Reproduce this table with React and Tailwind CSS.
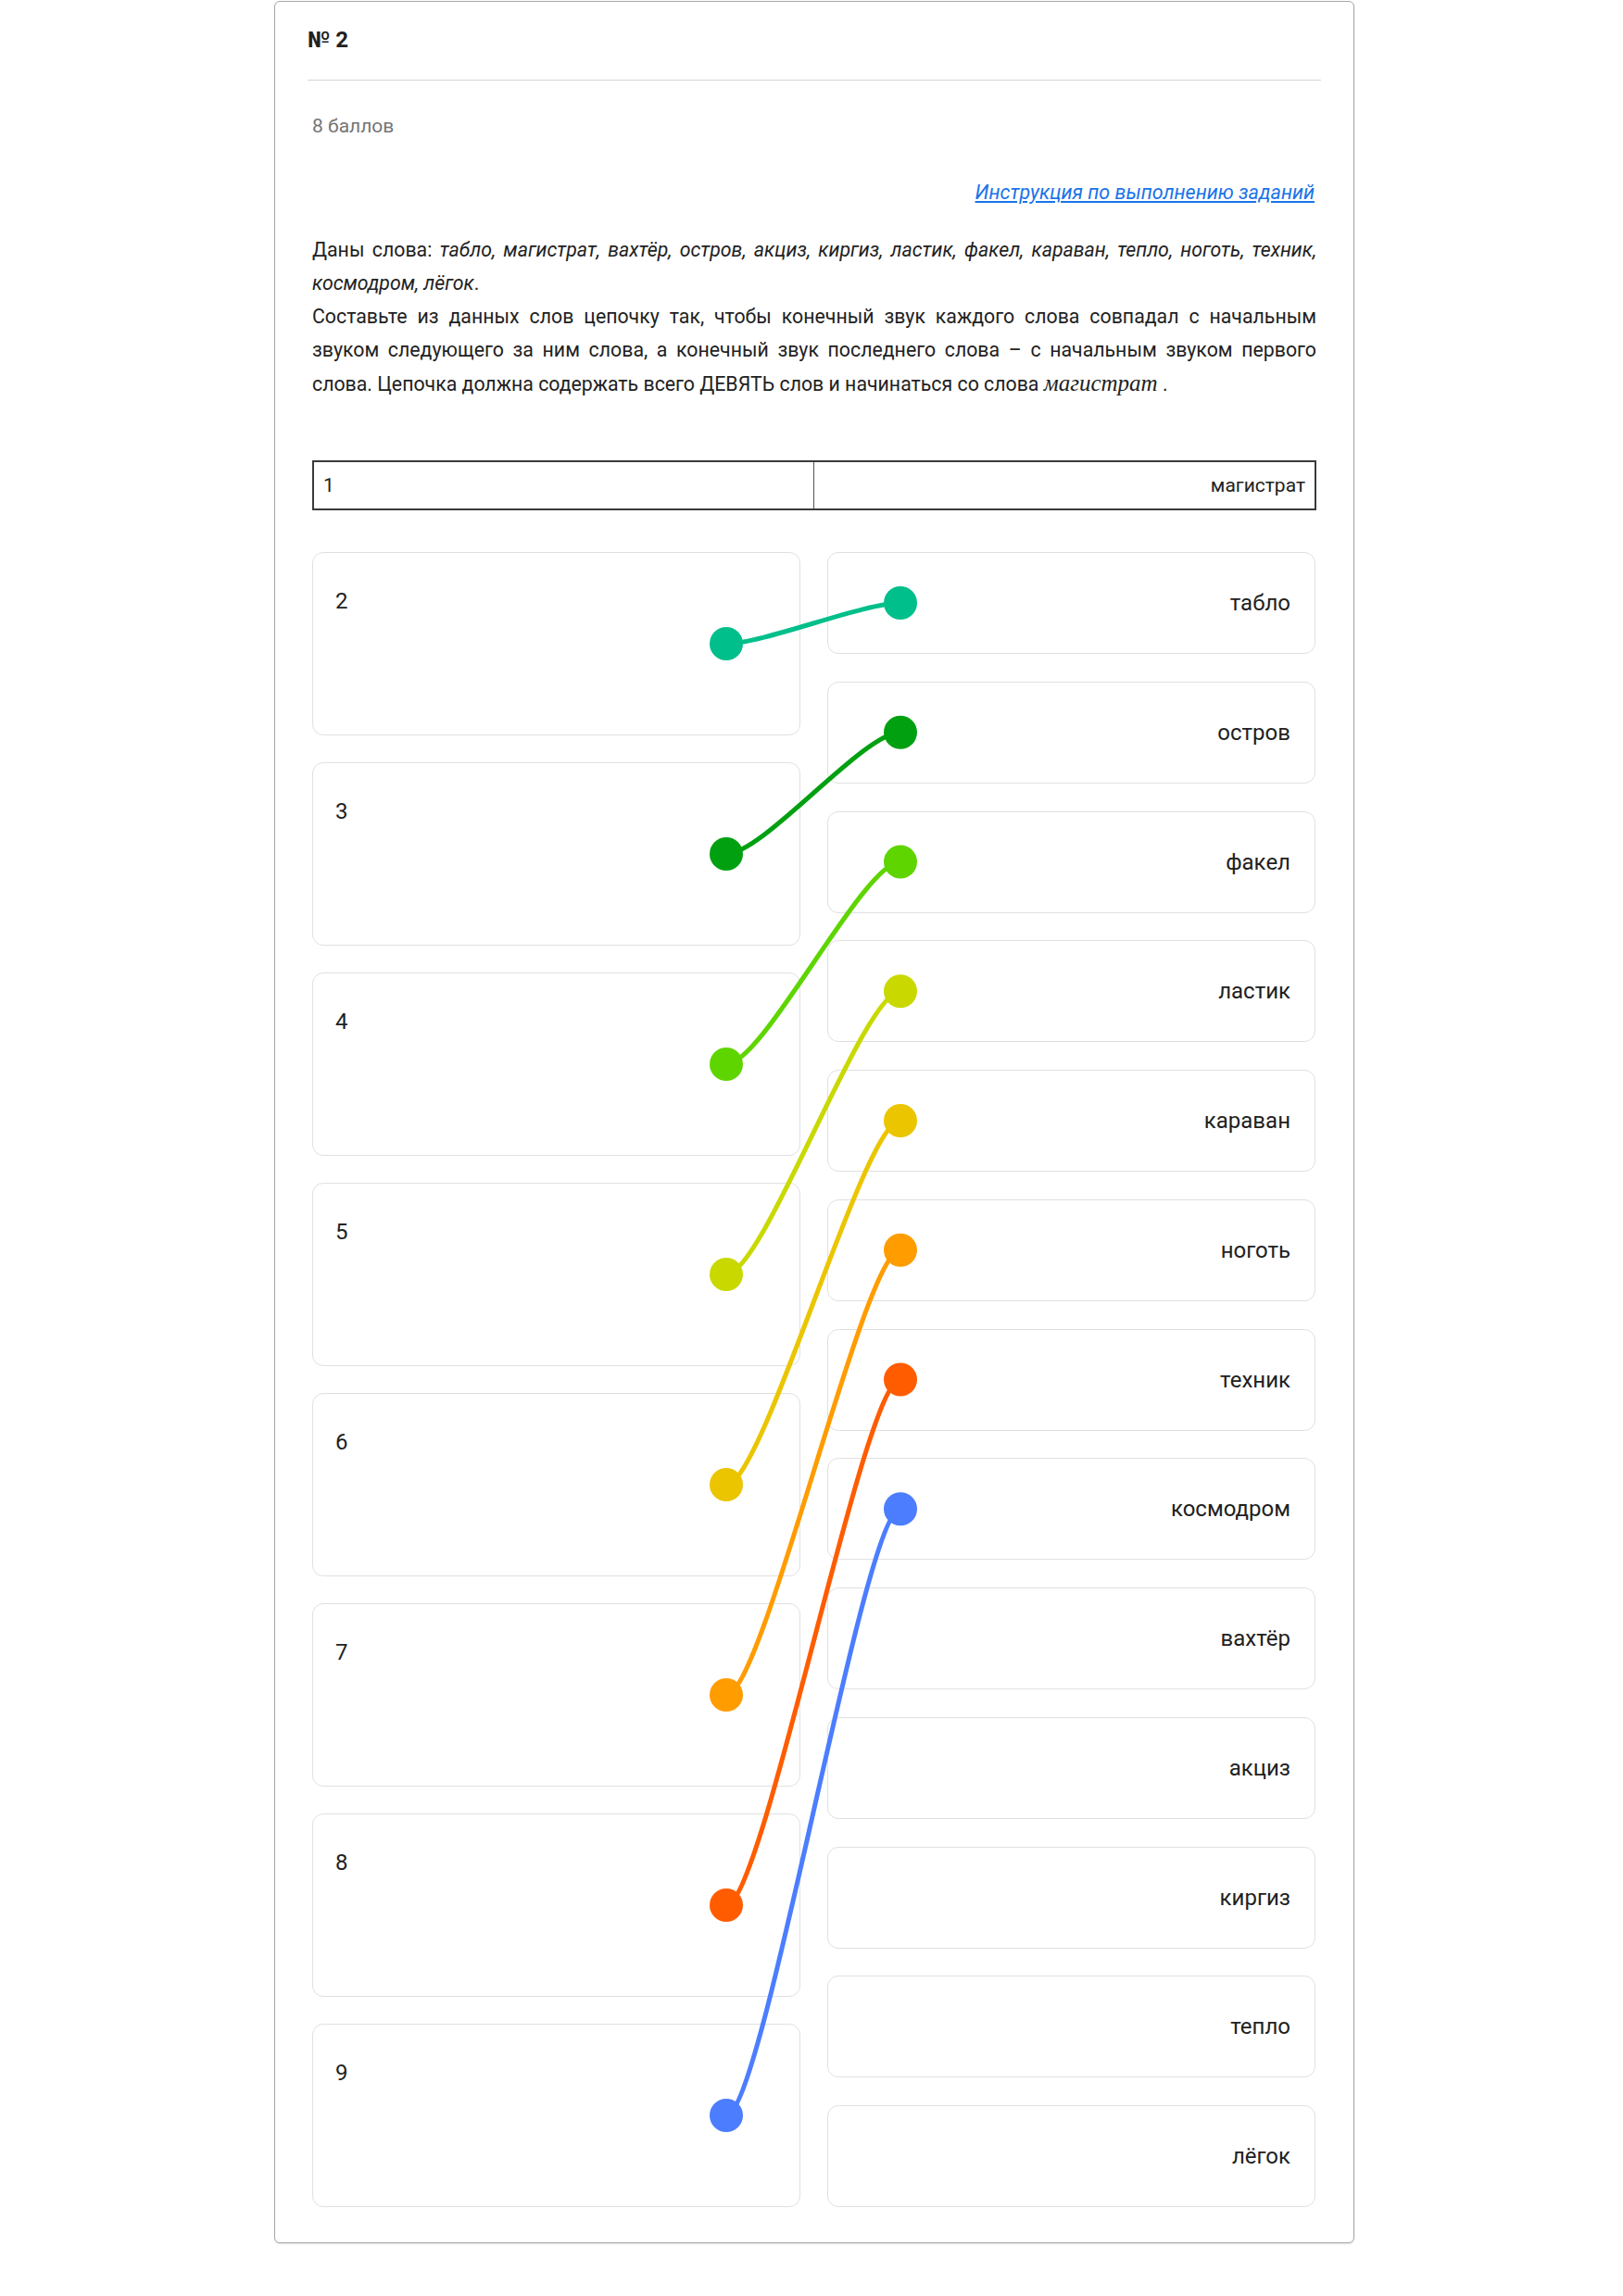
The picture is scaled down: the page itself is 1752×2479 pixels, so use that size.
import React from "react";

const leftNums = [2, 3, 4, 5, 6, 7, 8, 9];
const rightWords = [
  "табло",
  "остров",
  "факел",
  "ластик",
  "караван",
  "ноготь",
  "техник",
  "космодром",
  "вахтёр",
  "акциз",
  "киргиз",
  "тепло",
  "лёгок",
];

const LEFT_H = 198;
const LEFT_GAP = 29;
const RIGHT_H = 110;
const RIGHT_GAP = 29.75;
const LX = 447;
const RX = 635;

const links = [
  [0, 0, "#00BF8A"],
  [1, 1, "#00A010"],
  [2, 2, "#5FD500"],
  [3, 3, "#C9D900"],
  [4, 4, "#EBC500"],
  [5, 5, "#FF9C00"],
  [6, 6, "#FF5C00"],
  [7, 7, "#4C7DFF"],
];

function Connections() {
  const totalH = 8 * LEFT_H + 7 * LEFT_GAP;
  return (
    <svg
      className="absolute left-0 top-0 pointer-events-none overflow-visible"
      width={1083}
      height={totalH}
      viewBox={`0 0 1083 ${totalH}`}
    >
      {links.map(([l, r, c], i) => {
        const y1 = l * (LEFT_H + LEFT_GAP) + LEFT_H / 2;
        const y2 = r * (RIGHT_H + RIGHT_GAP) + RIGHT_H / 2;
        const d = `M ${LX} ${y1} C ${LX + 40} ${y1}, ${RX - 40} ${y2}, ${RX} ${y2}`;
        return (
          <g key={i}>
            <path d={d} fill="none" stroke={c} strokeWidth="5" strokeLinecap="round" />
            <circle cx={LX} cy={y1} r="18" fill={c} />
            <circle cx={RX} cy={y2} r="18" fill={c} />
          </g>
        );
      })}
    </svg>
  );
}

export default function App() {
  return (
    <div className="min-h-[2479px] bg-white font-['Roboto',sans-serif] text-[#212121]">
      <div className="ml-[296px] mt-[1px] w-[1166px] rounded-[6px] border-[1.5px] border-[#a8a8a8] bg-white pb-[38px] shadow-[0_1px_2px_rgba(0,0,0,0.12)]">
        <div className="mx-[35px] border-b-[1.5px] border-[#d4d4d4] pb-[25px] pt-[23px]">
          <div className="text-[24px] font-bold leading-[36px]">№ 2</div>
        </div>

        <div className="px-[40px]">
          <div className="mt-[31px] text-[21px] leading-[36px] text-[#757575]">8 баллов</div>

          <div className="mt-[36px] pr-[2px] text-right text-[21.5px] leading-[36px]">
            <a href="#" className="italic text-[#1a73e8] underline">
              Инструкция по выполнению заданий
            </a>
          </div>

          <div className="mt-[26px] text-[21.3px] leading-[36px] text-[#222]">
            <p className="text-justify">
              Даны слова:{" "}
              <i>
                табло, магистрат, вахтёр, остров, акциз, киргиз, ластик, факел, караван, тепло,
                ноготь, техник, космодром, лёгок
              </i>
              .
            </p>
            <p className="text-justify">
              Составьте из данных слов цепочку так, чтобы конечный звук каждого слова совпадал с
              начальным звуком следующего за ним слова, а конечный звук последнего слова – с
              начальным звуком первого слова. Цепочка должна содержать всего ДЕВЯТЬ слов и
              начинаться со слова{" "}
              <span className="font-['Liberation_Serif',serif] text-[25px] italic">магистрат</span>{" "}
              .
            </p>
          </div>

          <div className="mt-[64px] flex border-2 border-[#3a3a3a] text-[21px] leading-[32px]">
            <div className="w-1/2 border-r border-[#555] px-[10px] py-[9px]">1</div>
            <div className="w-1/2 px-[10px] py-[9px] text-right">магистрат</div>
          </div>

          <div className="relative mt-[45px] flex gap-[29px]">
            <div className="flex w-[527px] flex-col gap-[29px]">
              {leftNums.map((n) => (
                <div
                  key={n}
                  className="h-[198px] rounded-[12px] border-[1.5px] border-[#e0e0e0] bg-white pl-[24px] pt-[34px] text-[24px] leading-[36px]"
                >
                  {n}
                </div>
              ))}
            </div>
            <div className="flex w-[527px] flex-col gap-[29.75px]">
              {rightWords.map((w) => (
                <div
                  key={w}
                  className="flex h-[110px] items-center justify-end rounded-[12px] border-[1.5px] border-[#e0e0e0] bg-white pr-[26px] text-[24px] leading-[36px]"
                >
                  {w}
                </div>
              ))}
            </div>
            <Connections />
          </div>
        </div>
      </div>
    </div>
  );
}
